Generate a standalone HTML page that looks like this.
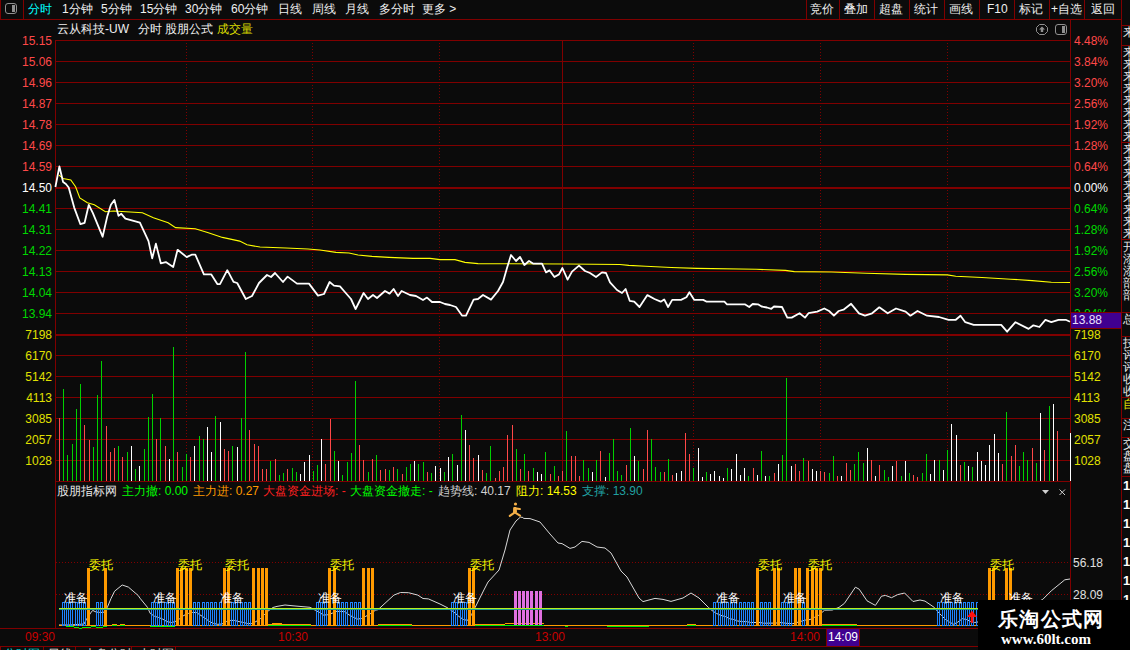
<!DOCTYPE html>
<html><head><meta charset="utf-8"><style>
html,body{margin:0;padding:0;background:#0b0b0b;width:1130px;height:650px;overflow:hidden}
#root{position:relative;width:1130px;height:650px;overflow:hidden;background:#0b0b0b;font-family:"Liberation Sans",sans-serif}
.t{position:absolute;white-space:nowrap;font-size:12px;line-height:14px}
.r{text-align:right}
svg{position:absolute;left:0;top:0}
</style></head><body><div id="root">
<svg width="1130" height="650" viewBox="0 0 1130 650">
<rect x="0" y="19" width="1121" height="1" fill="#800000"/>
<rect x="0" y="0" width="1" height="19" fill="#800000"/>
<rect x="23" y="0" width="1" height="19" fill="#800000"/>
<rect x="806" y="0" width="1" height="19" fill="#800000"/>
<rect x="839" y="0" width="1" height="19" fill="#800000"/>
<rect x="874" y="0" width="1" height="19" fill="#800000"/>
<rect x="909" y="0" width="1" height="19" fill="#800000"/>
<rect x="944" y="0" width="1" height="19" fill="#800000"/>
<rect x="979" y="0" width="1" height="19" fill="#800000"/>
<rect x="1014" y="0" width="1" height="19" fill="#800000"/>
<rect x="1049" y="0" width="1" height="19" fill="#800000"/>
<rect x="1084" y="0" width="1" height="19" fill="#800000"/>
<rect x="1121" y="0" width="1" height="600" fill="#800000"/>
<rect x="55" y="40" width="1" height="588" fill="#800000"/>
<rect x="1070" y="20" width="1" height="608" fill="#800000"/>
<rect x="55" y="40" width="1015" height="1" fill="#800000"/>
<rect x="55" y="61" width="1015" height="1" fill="#800000"/>
<rect x="55" y="82" width="1015" height="1" fill="#800000"/>
<rect x="55" y="103" width="1015" height="1" fill="#800000"/>
<rect x="55" y="124" width="1015" height="1" fill="#800000"/>
<rect x="55" y="145" width="1015" height="1" fill="#800000"/>
<rect x="55" y="166" width="1015" height="1" fill="#800000"/>
<rect x="55" y="187" width="1015" height="2" fill="#800000"/>
<rect x="55" y="208" width="1015" height="1" fill="#800000"/>
<rect x="55" y="229" width="1015" height="1" fill="#800000"/>
<rect x="55" y="250" width="1015" height="1" fill="#800000"/>
<rect x="55" y="271" width="1015" height="1" fill="#800000"/>
<rect x="55" y="292" width="1015" height="1" fill="#800000"/>
<rect x="55" y="313" width="1015" height="1" fill="#800000"/>
<rect x="55" y="334" width="1015" height="2" fill="#800000"/>
<rect x="55" y="355" width="1015" height="1" fill="#800000"/>
<rect x="55" y="376" width="1015" height="1" fill="#800000"/>
<rect x="55" y="397" width="1015" height="1" fill="#800000"/>
<rect x="55" y="418" width="1015" height="1" fill="#800000"/>
<rect x="55" y="439" width="1015" height="1" fill="#800000"/>
<rect x="55" y="460" width="1015" height="1" fill="#800000"/>
<rect x="55" y="481" width="1015" height="1" fill="#800000"/>
<line x1="186.5" y1="43" x2="186.5" y2="481" stroke="#800000" stroke-width="1" stroke-dasharray="1 2"/>
<line x1="312.5" y1="43" x2="312.5" y2="481" stroke="#800000" stroke-width="1" stroke-dasharray="1 2"/>
<line x1="439.5" y1="43" x2="439.5" y2="481" stroke="#800000" stroke-width="1" stroke-dasharray="1 2"/>
<line x1="693.5" y1="43" x2="693.5" y2="481" stroke="#800000" stroke-width="1" stroke-dasharray="1 2"/>
<line x1="820.5" y1="43" x2="820.5" y2="481" stroke="#800000" stroke-width="1" stroke-dasharray="1 2"/>
<line x1="947.5" y1="43" x2="947.5" y2="481" stroke="#800000" stroke-width="1" stroke-dasharray="1 2"/>
<rect x="562" y="40" width="1" height="441" fill="#800000"/>
<line x1="56" y1="562.5" x2="1070" y2="562.5" stroke="#800000" stroke-width="1" stroke-dasharray="1 2"/>
<line x1="56" y1="594.5" x2="1070" y2="594.5" stroke="#800000" stroke-width="1" stroke-dasharray="1 2"/>
<rect x="0" y="628" width="1121" height="1" fill="#800000"/>
<rect x="0" y="646" width="1121" height="1" fill="#800000"/>
<rect x="0" y="646" width="1" height="4" fill="#800000"/>
<rect x="43" y="646" width="1" height="4" fill="#800000"/>
<rect x="75" y="646" width="1" height="4" fill="#800000"/>
<rect x="131" y="646" width="1" height="4" fill="#800000"/>
<rect x="175" y="646" width="1" height="4" fill="#800000"/>
<rect x="1121" y="25" width="9" height="1" fill="#800000"/>
<rect x="1121" y="45" width="9" height="1" fill="#800000"/>
<rect x="1121" y="142" width="9" height="1" fill="#800000"/>
<rect x="1121" y="239" width="9" height="1" fill="#800000"/>
<rect x="1121" y="312" width="9" height="1" fill="#800000"/>
<rect x="1121" y="336" width="9" height="1" fill="#800000"/>
<rect x="1121" y="397" width="9" height="1" fill="#800000"/>
<rect x="1121" y="418" width="9" height="1" fill="#800000"/>
<rect x="1121" y="437" width="9" height="1" fill="#800000"/>
<rect x="1121" y="476" width="9" height="1" fill="#800000"/>
<path d="M59.5,418V481M84.5,425V481M89.5,440V481M106.5,426V481M110.5,452V481M114.5,448V481M122.5,457V481M156.5,439V481M165.5,446V481M177.5,452V481M190.5,457V481M224.5,449V481M228.5,451V481M249.5,430V481M254.5,444V481M258.5,446V481M262.5,469V481M266.5,469V481M275.5,459V481M287.5,469V481M325.5,464V481M330.5,419V481M359.5,445V481M363.5,460V481M372.5,459V481M380.5,470V481M385.5,469V481M393.5,467V481M402.5,474V481M427.5,472V481M469.5,445V481M473.5,458V481M482.5,470V481M495.5,478V481M499.5,471V481M503.5,467V481M507.5,435V481M512.5,425V481M520.5,469V481M528.5,471V481M550.5,474V481M558.5,476V481M562.5,471V481M571.5,456V481M575.5,456V481M579.5,476V481M600.5,451V481M626.5,465V481M643.5,469V481M647.5,430V481M664.5,472V481M672.5,475V481M685.5,433V481M689.5,454V481M753.5,468V481M774.5,473V481M795.5,464V481M799.5,471V481M808.5,461V481M820.5,471V481M824.5,472V481M837.5,476V481M846.5,463V481M850.5,470V481M871.5,460V481M879.5,465V481M896.5,461V481M913.5,475V481M917.5,477V481M960.5,465V481M1002.5,464V481M1011.5,456V481M1015.5,445V481M1032.5,448V481M1044.5,450V481M1057.5,431V481" stroke="#ff4848" stroke-width="1" fill="none" shape-rendering="crispEdges"/>
<path d="M63.5,389V481M67.5,455V481M72.5,444V481M76.5,409V481M80.5,384V481M93.5,447V481M97.5,395V481M101.5,361V481M118.5,446V481M127.5,452V481M135.5,469V481M144.5,449V481M148.5,417V481M152.5,394V481M160.5,418V481M173.5,347V481M182.5,467V481M186.5,454V481M199.5,436V481M203.5,439V481M215.5,416V481M232.5,446V481M241.5,418V481M245.5,352V481M270.5,461V481M279.5,475V481M283.5,473V481M292.5,468V481M296.5,472V481M313.5,471V481M317.5,465V481M334.5,451V481M342.5,475V481M347.5,462V481M351.5,453V481M355.5,381V481M368.5,472V481M376.5,455V481M389.5,470V481M397.5,469V481M406.5,467V481M410.5,464V481M418.5,464V481M423.5,462V481M431.5,473V481M444.5,472V481M452.5,454V481M461.5,415V481M486.5,473V481M490.5,446V481M516.5,449V481M524.5,454V481M533.5,468V481M545.5,452V481M554.5,466V481M566.5,431V481M583.5,460V481M588.5,468V481M596.5,460V481M609.5,453V481M613.5,439V481M617.5,471V481M621.5,475V481M630.5,428V481M638.5,461V481M651.5,439V481M655.5,467V481M660.5,472V481M668.5,459V481M693.5,468V481M706.5,472V481M727.5,468V481M748.5,476V481M761.5,451V481M769.5,476V481M782.5,455V481M786.5,378V481M803.5,458V481M829.5,473V481M833.5,456V481M854.5,464V481M858.5,452V481M863.5,463V481M884.5,470V481M888.5,477V481M901.5,476V481M909.5,473V481M922.5,473V481M926.5,454V481M939.5,460V481M947.5,450V481M964.5,462V481M972.5,467V481M1006.5,412V481M1019.5,466V481M1023.5,452V481M1027.5,460V481M1036.5,463V481M1049.5,406V481" stroke="#00d000" stroke-width="1" fill="none" shape-rendering="crispEdges"/>
<path d="M131.5,446V481M139.5,466V481M169.5,459V481M194.5,446V481M207.5,427V481M211.5,452V481M220.5,422V481M237.5,447V481M300.5,474V481M304.5,462V481M309.5,455V481M321.5,439V481M338.5,461V481M414.5,461V481M435.5,466V481M440.5,468V481M448.5,457V481M457.5,465V481M465.5,430V481M478.5,455V481M537.5,472V481M541.5,474V481M592.5,472V481M605.5,477V481M634.5,456V481M676.5,473V481M681.5,471V481M698.5,448V481M702.5,477V481M710.5,474V481M714.5,471V481M719.5,476V481M723.5,478V481M731.5,469V481M736.5,454V481M740.5,475V481M744.5,468V481M757.5,475V481M765.5,476V481M778.5,464V481M791.5,466V481M812.5,469V481M816.5,471V481M841.5,476V481M867.5,448V481M875.5,476V481M892.5,466V481M905.5,461V481M930.5,474V481M934.5,460V481M943.5,470V481M951.5,424V481M956.5,435V481M968.5,466V481M977.5,452V481M981.5,461V481M985.5,465V481M989.5,445V481M994.5,434V481M998.5,453V481M1040.5,413V481M1053.5,404V481M1070.5,433V481" stroke="#ffffff" stroke-width="1" fill="none" shape-rendering="crispEdges"/>
<polyline points="59.0,175.1 63.1,178.5 70.8,180.0 75.6,186.8 79.8,197.9 87.4,202.8 94.3,204.8 105.4,211.7 113.7,211.0 142.4,212.8 153.4,217.7 168.2,222.7 175.6,227.6 195.3,228.8 207.6,232.5 222.4,237.4 239.7,241.1 247.0,244.8 260.0,247.0 286.0,248.0 308.0,249.0 320.0,250.0 336.0,252.4 349.0,253.0 358.0,255.0 372.0,256.4 389.0,257.4 413.0,258.4 430.0,258.4 440.0,259.6 455.0,259.6 465.0,262.4 478.0,263.6 566.0,264.0 620.0,264.5 628.8,265.4 645.7,266.3 671.3,267.5 697.0,268.4 756.3,269.3 785.5,270.4 794.3,271.6 831.5,272.0 866.0,273.2 905.6,274.4 947.4,274.9 955.8,276.3 982.0,277.5 1010.7,279.2 1032.2,280.6 1051.3,282.3 1070.0,282.5" fill="none" stroke="#ffff00" stroke-width="1.1"/>
<polyline points="55.4,187.0 59.4,166.5 63.1,182.0 65.9,184.0 68.7,187.5 74.2,207.6 80.4,224.2 84.6,222.8 88.8,204.8 92.9,213.1 102.6,236.7 107.4,215.9 110.9,204.8 114.4,200.0 118.5,215.9 121.3,213.8 125.4,218.7 139.9,222.7 148.5,241.1 152.2,258.4 155.9,243.6 160.8,263.3 165.8,262.1 173.2,267.0 177.6,249.8 186.7,257.1 191.6,254.7 195.3,254.7 203.9,274.4 211.3,274.4 217.5,284.2 220.0,284.2 227.3,270.2 233.5,281.8 237.2,283.0 245.8,299.0 252.0,296.0 259.0,283.0 267.0,275.0 271.0,277.0 275.0,273.0 283.0,282.0 287.6,276.6 297.0,283.6 309.0,283.6 318.0,295.6 324.0,294.0 329.6,282.0 334.0,285.6 340.0,286.4 344.0,291.0 351.0,299.0 355.6,309.0 363.6,293.0 368.0,299.0 373.0,295.0 377.0,298.0 385.0,291.0 389.6,293.6 393.6,289.0 398.0,296.0 401.6,291.0 410.0,295.0 416.0,296.0 423.0,300.0 427.0,297.6 432.0,302.0 440.0,302.0 445.0,304.0 450.0,305.0 456.0,307.0 462.0,315.6 466.0,315.6 473.6,299.6 478.0,299.0 483.0,295.0 491.0,299.6 498.0,291.0 503.0,282.0 507.0,268.0 511.0,255.0 516.0,261.0 520.0,257.0 524.4,265.0 529.0,261.0 533.0,263.6 542.0,263.6 546.0,272.4 549.6,270.4 554.4,277.0 559.0,274.4 562.4,268.0 567.6,279.6 572.0,271.6 579.0,265.6 585.0,271.0 590.0,273.0 596.0,277.0 602.0,272.4 606.0,273.0 610.0,282.4 617.0,290.0 622.0,293.0 625.6,289.0 629.7,300.8 634.2,301.7 639.5,307.0 647.4,295.1 654.5,299.0 660.7,301.7 664.2,299.4 668.1,307.0 672.2,299.9 681.0,299.9 686.4,297.3 689.4,292.3 694.3,299.9 703.2,299.9 706.7,301.7 724.4,301.7 727.0,304.3 744.8,304.3 749.2,307.0 752.7,304.0 758.0,304.3 761.6,306.5 766.9,307.5 771.3,308.8 774.0,306.5 782.0,307.0 787.3,317.6 791.7,317.6 799.6,313.2 805.0,317.6 808.5,313.2 817.2,311.6 824.3,308.5 829.1,311.0 833.9,315.7 838.7,311.0 843.5,309.7 851.1,303.8 859.0,313.3 865.0,315.7 872.1,313.3 879.3,307.3 887.7,313.3 896.0,308.5 905.6,311.6 910.4,315.7 917.5,311.0 927.1,315.7 939.0,317.0 948.6,319.8 955.8,319.8 960.5,315.7 965.3,322.2 973.7,324.8 1001.2,324.8 1007.1,331.7 1015.5,322.2 1028.6,328.9 1033.4,325.3 1039.4,327.0 1045.4,319.8 1051.3,322.2 1058.5,319.8 1065.7,319.8 1070.0,321.7" fill="none" stroke="#ffffff" stroke-width="1.8" stroke-linejoin="round"/>
<polyline points="59.0,625.0 70.0,625.0 84.0,624.0 86.2,619.8 90.7,612.9 92.7,610.4 96.0,612.0 99.6,612.4 103.6,612.4 107.5,606.9 111.0,598.5 114.6,591.2 122.2,585.0 128.4,587.1 138.1,595.4 140.0,598.2 147.6,607.5 150.2,613.4 154.6,616.3 158.7,617.5 162.8,619.2 166.9,621.6 171.6,622.5 175.1,621.6 179.8,618.7 183.9,615.4 188.5,613.4 192.5,612.5 196.4,612.5 201.0,615.5 205.4,618.5 209.5,621.5 213.5,623.4 217.4,624.3 222.0,624.0 226.4,621.6 230.8,620.4 234.3,620.4 239.0,621.6 243.6,622.5 247.7,623.6 251.2,623.6 255.9,621.6 260.3,618.7 264.4,614.6 268.8,610.5 272.9,607.5 277.0,606.4 285.0,605.0 293.0,605.8 310.0,607.3 315.6,610.4 319.3,612.3 323.6,615.1 327.3,614.8 332.3,613.2 336.0,611.4 340.4,611.4 344.7,611.7 349.0,614.8 353.4,617.3 357.7,619.1 361.4,618.5 365.8,616.3 370.1,613.9 375.7,610.1 378.0,609.7 393.9,595.1 400.5,592.5 408.5,592.7 417.8,595.1 423.0,598.5 428.4,598.9 435.0,601.8 440.0,604.0 447.0,607.5 454.0,612.2 458.7,616.3 463.4,619.5 467.5,620.4 471.6,614.6 475.1,607.5 483.9,590.0 488.0,582.0 499.0,570.0 505.0,550.0 510.0,530.0 516.0,521.0 520.3,517.2 522.9,517.4 523.5,518.4 530.0,518.6 540.0,522.0 550.0,534.0 558.0,543.0 562.0,543.6 570.0,548.4 575.0,547.0 582.0,541.4 589.0,542.4 597.0,547.0 605.0,548.0 611.0,553.0 621.0,571.0 627.0,577.0 639.0,598.0 643.0,601.6 655.0,598.4 663.0,599.4 671.0,601.4 683.0,598.0 691.0,593.0 699.0,598.0 705.0,604.0 708.5,607.5 712.0,610.5 716.4,613.4 720.8,615.4 725.5,616.6 729.6,618.7 733.7,619.5 737.7,621.0 742.4,621.6 746.5,621.6 750.6,622.5 760.0,622.5 763.5,623.2 775.8,623.1 780.0,622.5 787.3,623.4 792.7,623.7 796.9,622.5 801.1,621.3 805.3,620.1 810.1,619.5 814.3,617.4 818.6,615.3 822.2,612.3 824.6,610.2 832.4,610.0 839.0,607.4 844.4,603.4 855.4,587.2 859.2,589.2 867.0,600.8 875.4,605.4 881.5,596.2 885.4,595.4 891.5,597.7 897.7,594.6 904.6,593.0 913.0,601.5 920.0,600.0 925.0,601.1 934.4,607.5 936.7,610.5 941.4,615.4 945.5,619.5 949.6,622.2 953.7,624.2 957.7,622.2 962.4,618.7 966.5,619.5 970.6,621.6 974.7,622.5 990.0,620.0 1020.0,612.0 1042.8,599.3 1051.3,590.8 1064.8,579.8 1070.0,579.0" fill="none" stroke="#d8d8d8" stroke-width="1"/>
<rect x="59" y="625" width="1011" height="1" fill="#ff9a00"/>
<rect x="66" y="626" width="8" height="1" fill="#00f000"/>
<rect x="74" y="627" width="5" height="1" fill="#00f000"/>
<rect x="79" y="628" width="3" height="1" fill="#00f000"/>
<rect x="82" y="627" width="9" height="1" fill="#00f000"/>
<rect x="91" y="626" width="5" height="1" fill="#00f000"/>
<rect x="96" y="627" width="7" height="1" fill="#00f000"/>
<rect x="103" y="626" width="4" height="1" fill="#00f000"/>
<rect x="112" y="625" width="5" height="1" fill="#00f000"/>
<rect x="120" y="625" width="5" height="1" fill="#00f000"/>
<rect x="150" y="626" width="25" height="1" fill="#00f000"/>
<rect x="268" y="625" width="43" height="1" fill="#00f000"/>
<rect x="378" y="625" width="34" height="1" fill="#00f000"/>
<rect x="475" y="625" width="69" height="1" fill="#00f000"/>
<rect x="822" y="625" width="35" height="1" fill="#00f000"/>
<rect x="565" y="626" width="3" height="1" fill="#00f000"/>
<rect x="607" y="626" width="42" height="1" fill="#00f000"/>
<rect x="687" y="625" width="9" height="1" fill="#00f000"/>
<rect x="112" y="624" width="5" height="1" fill="#ff9a00"/>
<rect x="120" y="624" width="5" height="1" fill="#ff9a00"/>
<rect x="268" y="624" width="43" height="1" fill="#ff9a00"/>
<rect x="272" y="623" width="10" height="1" fill="#ff9a00"/>
<rect x="378" y="624" width="34" height="1" fill="#ff9a00"/>
<rect x="475" y="624" width="30" height="1" fill="#ff9a00"/>
<rect x="505" y="623" width="39" height="1" fill="#ff9a00"/>
<rect x="822" y="624" width="35" height="1" fill="#ff9a00"/>
<rect x="687" y="624" width="9" height="1" fill="#ff9a00"/>
<path d="M62.5,602.5H64.5V625.5H62.5ZM66.5,602.5H68.5V625.5H66.5ZM70.5,602.5H72.5V625.5H70.5ZM75.5,602.5H77.5V625.5H75.5ZM79.5,602.5H81.5V625.5H79.5ZM83.5,602.5H85.5V625.5H83.5ZM96.5,602.5H98.5V625.5H96.5ZM100.5,602.5H102.5V625.5H100.5ZM151.5,602.5H153.5V625.5H151.5ZM155.5,602.5H157.5V625.5H155.5ZM159.5,602.5H161.5V625.5H159.5ZM164.5,602.5H166.5V625.5H164.5ZM168.5,602.5H170.5V625.5H168.5ZM172.5,602.5H174.5V625.5H172.5ZM193.5,602.5H195.5V625.5H193.5ZM197.5,602.5H199.5V625.5H197.5ZM202.5,602.5H204.5V625.5H202.5ZM206.5,602.5H208.5V625.5H206.5ZM210.5,602.5H212.5V625.5H210.5ZM214.5,602.5H216.5V625.5H214.5ZM219.5,602.5H221.5V625.5H219.5ZM231.5,602.5H233.5V625.5H231.5ZM235.5,602.5H237.5V625.5H235.5ZM240.5,602.5H242.5V625.5H240.5ZM244.5,602.5H246.5V625.5H244.5ZM248.5,602.5H250.5V625.5H248.5ZM316.5,602.5H318.5V625.5H316.5ZM320.5,602.5H322.5V625.5H320.5ZM324.5,602.5H326.5V625.5H324.5ZM337.5,602.5H339.5V625.5H337.5ZM341.5,602.5H343.5V625.5H341.5ZM345.5,602.5H347.5V625.5H345.5ZM350.5,602.5H352.5V625.5H350.5ZM354.5,602.5H356.5V625.5H354.5ZM358.5,602.5H360.5V625.5H358.5ZM451.5,602.5H453.5V625.5H451.5ZM455.5,602.5H457.5V625.5H455.5ZM460.5,602.5H462.5V625.5H460.5ZM464.5,602.5H466.5V625.5H464.5ZM713.5,602.5H715.5V625.5H713.5ZM718.5,602.5H720.5V625.5H718.5ZM722.5,602.5H724.5V625.5H722.5ZM726.5,602.5H728.5V625.5H726.5ZM730.5,602.5H732.5V625.5H730.5ZM734.5,602.5H736.5V625.5H734.5ZM739.5,602.5H741.5V625.5H739.5ZM743.5,602.5H745.5V625.5H743.5ZM747.5,602.5H749.5V625.5H747.5ZM751.5,602.5H753.5V625.5H751.5ZM760.5,602.5H762.5V625.5H760.5ZM764.5,602.5H766.5V625.5H764.5ZM768.5,602.5H770.5V625.5H768.5ZM781.5,602.5H783.5V625.5H781.5ZM785.5,602.5H787.5V625.5H785.5ZM789.5,602.5H791.5V625.5H789.5ZM802.5,602.5H804.5V625.5H802.5ZM937.5,602.5H939.5V625.5H937.5ZM942.5,602.5H944.5V625.5H942.5ZM946.5,602.5H948.5V625.5H946.5ZM950.5,602.5H952.5V625.5H950.5ZM954.5,602.5H956.5V625.5H954.5ZM959.5,602.5H961.5V625.5H959.5ZM963.5,602.5H965.5V625.5H963.5ZM967.5,602.5H969.5V625.5H967.5ZM971.5,602.5H973.5V625.5H971.5ZM976.5,602.5H978.5V625.5H976.5Z" fill="none" stroke="#1e84ff" stroke-width="1" shape-rendering="crispEdges"/>
<rect x="87" y="568" width="3" height="58" fill="#ff9a00"/>
<rect x="104" y="568" width="3" height="58" fill="#ff9a00"/>
<rect x="176" y="568" width="3" height="58" fill="#ff9a00"/>
<rect x="180" y="568" width="3" height="58" fill="#ff9a00"/>
<rect x="185" y="568" width="3" height="58" fill="#ff9a00"/>
<rect x="189" y="568" width="3" height="58" fill="#ff9a00"/>
<rect x="223" y="568" width="3" height="58" fill="#ff9a00"/>
<rect x="227" y="568" width="3" height="58" fill="#ff9a00"/>
<rect x="252" y="568" width="3" height="58" fill="#ff9a00"/>
<rect x="257" y="568" width="3" height="58" fill="#ff9a00"/>
<rect x="261" y="568" width="3" height="58" fill="#ff9a00"/>
<rect x="265" y="568" width="3" height="58" fill="#ff9a00"/>
<rect x="328" y="568" width="3" height="58" fill="#ff9a00"/>
<rect x="333" y="568" width="3" height="58" fill="#ff9a00"/>
<rect x="362" y="568" width="3" height="58" fill="#ff9a00"/>
<rect x="367" y="568" width="3" height="58" fill="#ff9a00"/>
<rect x="371" y="568" width="3" height="58" fill="#ff9a00"/>
<rect x="468" y="568" width="3" height="58" fill="#ff9a00"/>
<rect x="472" y="568" width="3" height="58" fill="#ff9a00"/>
<rect x="756" y="568" width="3" height="58" fill="#ff9a00"/>
<rect x="773" y="568" width="3" height="58" fill="#ff9a00"/>
<rect x="777" y="568" width="3" height="58" fill="#ff9a00"/>
<rect x="794" y="568" width="3" height="58" fill="#ff9a00"/>
<rect x="798" y="568" width="3" height="58" fill="#ff9a00"/>
<rect x="806" y="568" width="3" height="58" fill="#ff9a00"/>
<rect x="811" y="568" width="3" height="58" fill="#ff9a00"/>
<rect x="815" y="568" width="3" height="58" fill="#ff9a00"/>
<rect x="819" y="568" width="3" height="58" fill="#ff9a00"/>
<rect x="988" y="568" width="3" height="58" fill="#ff9a00"/>
<rect x="992" y="568" width="3" height="58" fill="#ff9a00"/>
<rect x="1005" y="568" width="3" height="58" fill="#ff9a00"/>
<rect x="1009" y="568" width="3" height="58" fill="#ff9a00"/>
<rect x="514" y="591" width="3" height="34" fill="#e070e0"/>
<rect x="518" y="591" width="3" height="34" fill="#e070e0"/>
<rect x="522" y="591" width="3" height="34" fill="#e070e0"/>
<rect x="526" y="591" width="3" height="34" fill="#e070e0"/>
<rect x="530" y="591" width="3" height="34" fill="#e070e0"/>
<rect x="535" y="591" width="3" height="34" fill="#e070e0"/>
<rect x="539" y="591" width="3" height="34" fill="#e070e0"/>
<rect x="59" y="608" width="1011" height="1" fill="#b8f020"/>
<rect x="59" y="609" width="1011" height="1" fill="#20a090"/>
<path d="M972,610.8 L977,617 L973.3,617 L973.3,622.8 L970.8,622.8 L970.8,617 L967,617 Z" fill="#ff1010"/>
<g fill="#f5b048" stroke="#f5b048"><circle cx="515.5" cy="504" r="1.6" stroke="none"/><path d="M513.8,507.5 L516,507.5 L516.5,512 L513.5,512.8 Z" stroke-width="1"/><path d="M514.8,508.4 L519.8,509 M514.5,512.6 L509.8,515.8 M515.2,512.6 L520,515.6" fill="none" stroke-width="2.2" stroke-linecap="round"/></g>
<rect x="5.5" y="3.5" width="11" height="10" rx="2.5" fill="none" stroke="#909090" stroke-width="1"/>
<rect x="12" y="5" width="3" height="7" fill="#909090"/>
<path d="M1039.5,24.5 H1044.5 L1047.5,27.5 V31.5 L1044.5,34.5 H1039.5 L1036.5,31.5 V27.5 Z" fill="none" stroke="#909090" stroke-width="1"/>
<path d="M1042,26.5 L1045,29.5 L1043.2,29.5 L1043.2,32 L1040.8,32 L1040.8,29.5 L1039,29.5 Z" fill="#909090"/>
<rect x="1055.5" y="24.5" width="11" height="10" rx="2.5" fill="none" stroke="#909090" stroke-width="1"/>
<rect x="1062" y="26" width="3" height="7" fill="#909090"/>
<path d="M1042,490 L1049,490 L1045.5,494 Z" fill="#d0d0d0"/>
<path d="M1059.5,489.5 L1065,495 M1065,489.5 L1059.5,495" stroke="#d0d0d0" stroke-width="1"/>
</svg>
<div class="t" style="left:28px;top:2px;color:#00ffff;font-size:12px;">分时</div>
<div class="t" style="left:62px;top:2px;color:#f0f0f0;font-size:12px;">1分钟</div>
<div class="t" style="left:101px;top:2px;color:#f0f0f0;font-size:12px;">5分钟</div>
<div class="t" style="left:140px;top:2px;color:#f0f0f0;font-size:12px;">15分钟</div>
<div class="t" style="left:185px;top:2px;color:#f0f0f0;font-size:12px;">30分钟</div>
<div class="t" style="left:231px;top:2px;color:#f0f0f0;font-size:12px;">60分钟</div>
<div class="t" style="left:278px;top:2px;color:#f0f0f0;font-size:12px;">日线</div>
<div class="t" style="left:312px;top:2px;color:#f0f0f0;font-size:12px;">周线</div>
<div class="t" style="left:345px;top:2px;color:#f0f0f0;font-size:12px;">月线</div>
<div class="t" style="left:379px;top:2px;color:#f0f0f0;font-size:12px;">多分时</div>
<div class="t" style="left:422px;top:2px;color:#f0f0f0;font-size:12px;">更多 &gt;</div>
<div class="t" style="left:810px;top:2px;color:#f0f0f0;font-size:12px;">竞价</div>
<div class="t" style="left:844px;top:2px;color:#f0f0f0;font-size:12px;">叠加</div>
<div class="t" style="left:879px;top:2px;color:#f0f0f0;font-size:12px;">超盘</div>
<div class="t" style="left:914px;top:2px;color:#f0f0f0;font-size:12px;">统计</div>
<div class="t" style="left:949px;top:2px;color:#f0f0f0;font-size:12px;">画线</div>
<div class="t" style="left:987px;top:2px;color:#f0f0f0;font-size:12px;">F10</div>
<div class="t" style="left:1019px;top:2px;color:#f0f0f0;font-size:12px;">标记</div>
<div class="t" style="left:1051px;top:2px;color:#f0f0f0;font-size:12px;">+自选</div>
<div class="t" style="left:1091px;top:2px;color:#f0f0f0;font-size:12px;">返回</div>
<div class="t" style="left:57px;top:22px;color:#f0f0f0;font-size:12px;">云从科技-UW</div>
<div class="t" style="left:138px;top:22px;color:#f0f0f0;font-size:12px;">分时</div>
<div class="t" style="left:165px;top:22px;color:#f0f0f0;font-size:12px;">股朋公式</div>
<div class="t" style="left:217px;top:22px;color:#d8d800;font-size:12px;">成交量</div>
<div class="t r" style="right:1078px;top:34px;color:#ff4848">15.15</div>
<div class="t" style="left:1074px;top:34px;color:#ff4848">4.48%</div>
<div class="t r" style="right:1078px;top:55px;color:#ff4848">15.06</div>
<div class="t" style="left:1074px;top:55px;color:#ff4848">3.84%</div>
<div class="t r" style="right:1078px;top:76px;color:#ff4848">14.96</div>
<div class="t" style="left:1074px;top:76px;color:#ff4848">3.20%</div>
<div class="t r" style="right:1078px;top:97px;color:#ff4848">14.87</div>
<div class="t" style="left:1074px;top:97px;color:#ff4848">2.56%</div>
<div class="t r" style="right:1078px;top:118px;color:#ff4848">14.78</div>
<div class="t" style="left:1074px;top:118px;color:#ff4848">1.92%</div>
<div class="t r" style="right:1078px;top:139px;color:#ff4848">14.69</div>
<div class="t" style="left:1074px;top:139px;color:#ff4848">1.28%</div>
<div class="t r" style="right:1078px;top:160px;color:#ff4848">14.59</div>
<div class="t" style="left:1074px;top:160px;color:#ff4848">0.64%</div>
<div class="t r" style="right:1078px;top:181px;color:#ffffff">14.50</div>
<div class="t" style="left:1074px;top:181px;color:#ffffff">0.00%</div>
<div class="t r" style="right:1078px;top:202px;color:#00d800">14.41</div>
<div class="t" style="left:1074px;top:202px;color:#00d800">0.64%</div>
<div class="t r" style="right:1078px;top:223px;color:#00d800">14.31</div>
<div class="t" style="left:1074px;top:223px;color:#00d800">1.28%</div>
<div class="t r" style="right:1078px;top:244px;color:#00d800">14.22</div>
<div class="t" style="left:1074px;top:244px;color:#00d800">1.92%</div>
<div class="t r" style="right:1078px;top:265px;color:#00d800">14.13</div>
<div class="t" style="left:1074px;top:265px;color:#00d800">2.56%</div>
<div class="t r" style="right:1078px;top:286px;color:#00d800">14.04</div>
<div class="t" style="left:1074px;top:286px;color:#00d800">3.20%</div>
<div class="t r" style="right:1078px;top:307px;color:#00d800">13.94</div>
<div class="t" style="left:1074px;top:307px;color:#00d800">3.84%</div>
<div class="t r" style="right:1078px;top:328px;color:#e0e000">7198</div>
<div class="t" style="left:1074px;top:328px;color:#e0e000">7198</div>
<div class="t r" style="right:1078px;top:349px;color:#e0e000">6170</div>
<div class="t" style="left:1074px;top:349px;color:#e0e000">6170</div>
<div class="t r" style="right:1078px;top:370px;color:#e0e000">5142</div>
<div class="t" style="left:1074px;top:370px;color:#e0e000">5142</div>
<div class="t r" style="right:1078px;top:391px;color:#e0e000">4113</div>
<div class="t" style="left:1074px;top:391px;color:#e0e000">4113</div>
<div class="t r" style="right:1078px;top:412px;color:#e0e000">3085</div>
<div class="t" style="left:1074px;top:412px;color:#e0e000">3085</div>
<div class="t r" style="right:1078px;top:433px;color:#e0e000">2057</div>
<div class="t" style="left:1074px;top:433px;color:#e0e000">2057</div>
<div class="t r" style="right:1078px;top:454px;color:#e0e000">1028</div>
<div class="t" style="left:1074px;top:454px;color:#e0e000">1028</div>
<div style="position:absolute;left:1071px;top:312px;width:50px;height:17px;background:#400090;border-top:1px solid #800000;border-bottom:1px solid #800000;box-sizing:border-box"></div>
<div class="t" style="left:1072px;top:313px;color:#e8e0ff;font-size:12px;">13.88</div>
<div class="t" style="left:57px;top:484px;color:#e8e8e8;font-size:12px;">股朋指标网</div>
<div class="t" style="left:122px;top:484px;color:#00ff00;font-size:12px;">主力撤: 0.00</div>
<div class="t" style="left:193px;top:484px;color:#ff9a00;font-size:12px;">主力进: 0.27</div>
<div class="t" style="left:263px;top:484px;color:#ff2020;font-size:12px;">大盘资金进场: -</div>
<div class="t" style="left:350px;top:484px;color:#00ff00;font-size:12px;">大盘资金撤走: -</div>
<div class="t" style="left:438px;top:484px;color:#d0d0d0;font-size:12px;">趋势线: 40.17</div>
<div class="t" style="left:516px;top:484px;color:#ffff00;font-size:12px;">阻力: 14.53</div>
<div class="t" style="left:582px;top:484px;color:#20a0a0;font-size:12px;">支撑: 13.90</div>
<div class="t" style="left:89px;top:558px;color:#ffff00;font-size:12px;">委托</div>
<div class="t" style="left:178px;top:558px;color:#ffff00;font-size:12px;">委托</div>
<div class="t" style="left:225px;top:558px;color:#ffff00;font-size:12px;">委托</div>
<div class="t" style="left:330px;top:558px;color:#ffff00;font-size:12px;">委托</div>
<div class="t" style="left:470px;top:558px;color:#ffff00;font-size:12px;">委托</div>
<div class="t" style="left:758px;top:558px;color:#ffff00;font-size:12px;">委托</div>
<div class="t" style="left:808px;top:558px;color:#ffff00;font-size:12px;">委托</div>
<div class="t" style="left:990px;top:558px;color:#ffff00;font-size:12px;">委托</div>
<div class="t" style="left:64px;top:591px;color:#ffffff;font-size:12px;">准备</div>
<div class="t" style="left:153px;top:591px;color:#ffffff;font-size:12px;">准备</div>
<div class="t" style="left:220px;top:591px;color:#ffffff;font-size:12px;">准备</div>
<div class="t" style="left:318px;top:591px;color:#ffffff;font-size:12px;">准备</div>
<div class="t" style="left:453px;top:591px;color:#ffffff;font-size:12px;">准备</div>
<div class="t" style="left:716px;top:591px;color:#ffffff;font-size:12px;">准备</div>
<div class="t" style="left:783px;top:591px;color:#ffffff;font-size:12px;">准备</div>
<div class="t" style="left:940px;top:591px;color:#ffffff;font-size:12px;">准备</div>
<div class="t" style="left:1009px;top:591px;color:#ffffff;font-size:12px;">准备</div>
<div class="t" style="left:1073px;top:556px;color:#e0e0e0;font-size:12px;">56.18</div>
<div class="t" style="left:1073px;top:588px;color:#e0e0e0;font-size:12px;">28.09</div>
<div class="t" style="left:25px;top:630px;color:#c80000;font-size:12px;">09:30</div>
<div class="t" style="left:278px;top:630px;color:#c80000;font-size:12px;">10:30</div>
<div class="t" style="left:535px;top:630px;color:#c80000;font-size:12px;">13:00</div>
<div class="t" style="left:790px;top:630px;color:#c80000;font-size:12px;">14:00</div>
<div style="position:absolute;left:826px;top:628px;width:34px;height:19px;background:#400090;border:1px solid #800000;box-sizing:border-box"></div>
<div class="t" style="left:828px;top:630px;color:#ffffff;font-size:12px;">14:09</div>
<div style="position:absolute;left:1122px;top:20px;width:8px;height:580px;overflow:hidden"><div class="t" style="left:1px;top:6px;color:#e8e8e8;line-height:12px">来</div><div class="t" style="left:1px;top:26px;color:#e8e8e8;line-height:12px">来</div><div class="t" style="left:1px;top:38px;color:#e8e8e8;line-height:12px">来</div><div class="t" style="left:1px;top:50px;color:#e8e8e8;line-height:12px">来</div><div class="t" style="left:1px;top:62px;color:#e8e8e8;line-height:12px">来</div><div class="t" style="left:1px;top:74px;color:#e8e8e8;line-height:12px">来</div><div class="t" style="left:1px;top:86px;color:#e8e8e8;line-height:12px">来</div><div class="t" style="left:1px;top:98px;color:#e8e8e8;line-height:12px">来</div><div class="t" style="left:1px;top:110px;color:#e8e8e8;line-height:12px">来</div><div class="t" style="left:1px;top:123px;color:#e8e8e8;line-height:12px">来</div><div class="t" style="left:1px;top:135px;color:#e8e8e8;line-height:12px">来</div><div class="t" style="left:1px;top:147px;color:#e8e8e8;line-height:12px">来</div><div class="t" style="left:1px;top:159px;color:#e8e8e8;line-height:12px">来</div><div class="t" style="left:1px;top:171px;color:#e8e8e8;line-height:12px">来</div><div class="t" style="left:1px;top:183px;color:#e8e8e8;line-height:12px">来</div><div class="t" style="left:1px;top:195px;color:#e8e8e8;line-height:12px">来</div><div class="t" style="left:1px;top:207px;color:#e8e8e8;line-height:12px">来</div><div class="t" style="left:1px;top:221px;color:#e8e8e8;line-height:12px">开</div><div class="t" style="left:1px;top:233px;color:#e8e8e8;line-height:12px">添</div><div class="t" style="left:1px;top:245px;color:#e8e8e8;line-height:12px">添</div><div class="t" style="left:1px;top:257px;color:#e8e8e8;line-height:12px">部</div><div class="t" style="left:1px;top:269px;color:#e8e8e8;line-height:12px">部</div><div class="t" style="left:1px;top:293px;color:#e8e8e8;line-height:12px">总</div><div class="t" style="left:1px;top:317px;color:#e8e8e8;line-height:12px">技</div><div class="t" style="left:1px;top:329px;color:#e8e8e8;line-height:12px">评</div><div class="t" style="left:1px;top:341px;color:#e8e8e8;line-height:12px">评</div><div class="t" style="left:1px;top:353px;color:#e8e8e8;line-height:12px">收</div><div class="t" style="left:1px;top:365px;color:#e8e8e8;line-height:12px">收</div><div class="t" style="left:1px;top:378px;color:#e8e8e8;line-height:12px"><span style="color:#e0e000">自</span></div><div class="t" style="left:1px;top:399px;color:#e8e8e8;line-height:12px">注</div><div class="t" style="left:1px;top:418px;color:#e8e8e8;line-height:12px">交</div><div class="t" style="left:1px;top:430px;color:#e8e8e8;line-height:12px">盘</div><div class="t" style="left:1px;top:442px;color:#e8e8e8;line-height:12px">盘</div><div class="t" style="left:1px;top:459px;color:#ffffff;font-weight:bold;font-size:13px">1</div><div class="t" style="left:1px;top:478px;color:#ffffff;font-weight:bold;font-size:13px">1</div><div class="t" style="left:1px;top:497px;color:#ffffff;font-weight:bold;font-size:13px">1</div><div class="t" style="left:1px;top:516px;color:#ffffff;font-weight:bold;font-size:13px">1</div><div class="t" style="left:1px;top:535px;color:#ffffff;font-weight:bold;font-size:13px">1</div><div class="t" style="left:1px;top:554px;color:#ffffff;font-weight:bold;font-size:13px">1</div><div class="t" style="left:1px;top:573px;color:#ffffff;font-weight:bold;font-size:13px">1</div></div>
<div class="t" style="left:4px;top:647px;color:#00e0e0">分时图</div>
<div class="t" style="left:48px;top:647px;color:#e0e0e0">日线</div>
<div class="t" style="left:84px;top:647px;color:#e0e0e0">大盘分时</div>
<div class="t" style="left:138px;top:647px;color:#e0e0e0">小时图</div>
<div style="position:absolute;left:978px;top:600px;width:152px;height:50px;background:#000"></div>
<div class="t" style="left:998px;top:606px;font-size:20px;line-height:24px;letter-spacing:1.3px;color:#fff;font-weight:bold;font-family:'Liberation Serif',serif;top:607px">乐淘公式网</div>
<div class="t" style="left:1001px;top:631px;font-size:15px;line-height:16px;color:#fff;font-weight:bold;font-family:'Liberation Serif',serif">www.60lt.com</div>
</div></body></html>
